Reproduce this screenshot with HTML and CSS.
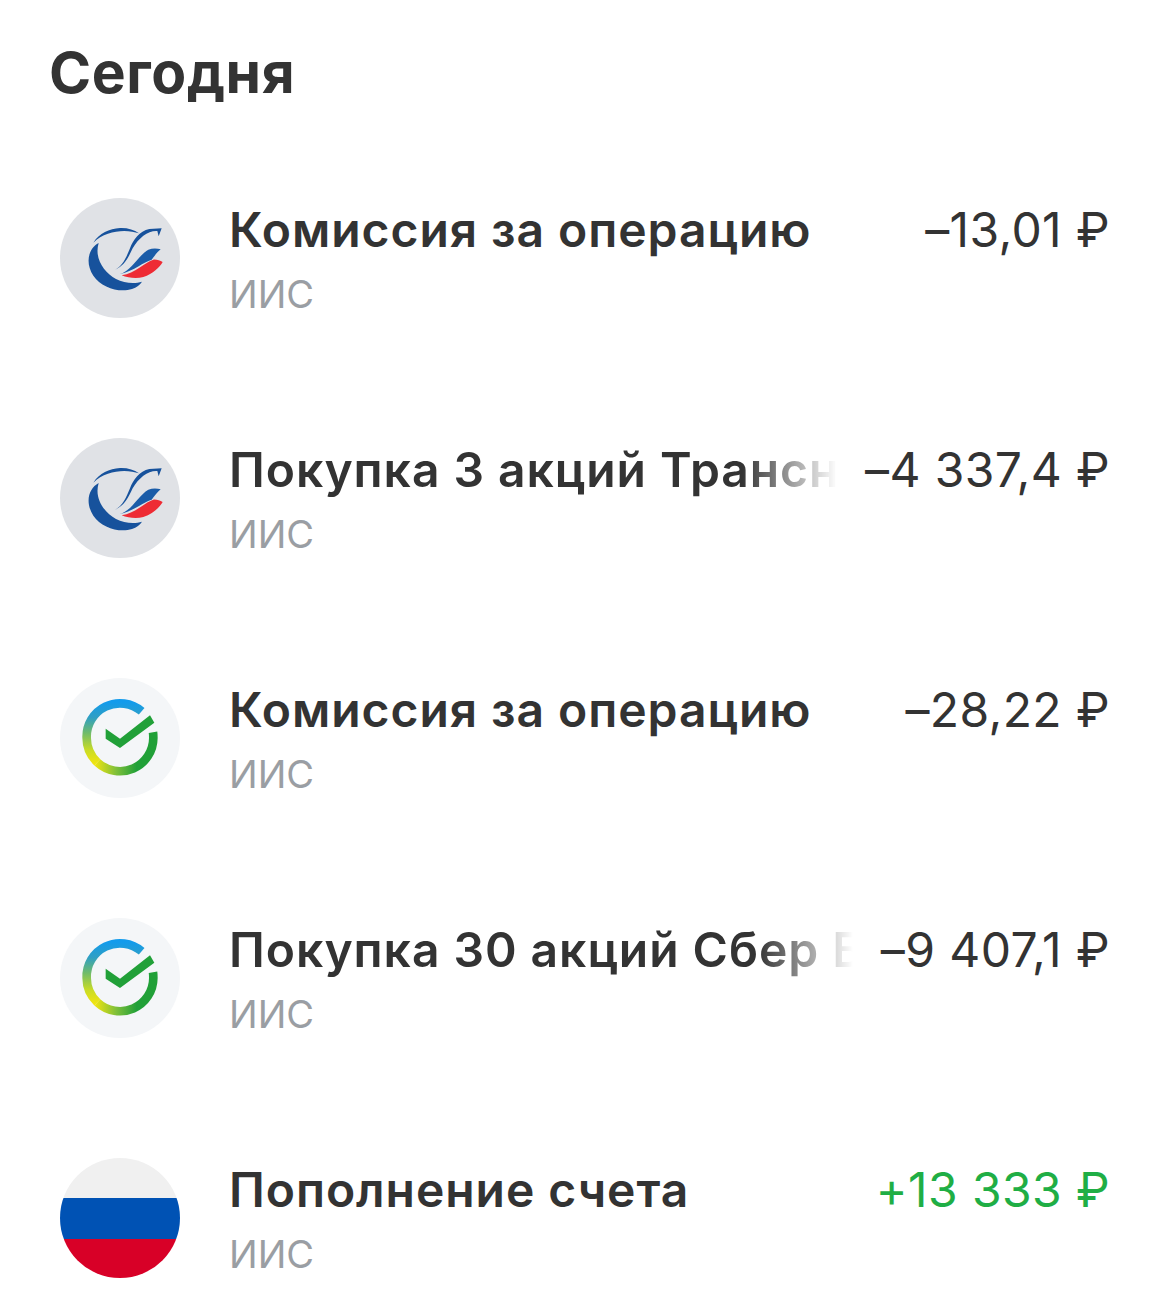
FILE: index.html
```html
<!DOCTYPE html>
<html lang="ru">

<head>
    <meta charset="UTF-8">
    <meta name="viewport" content="width=device-width, initial-scale=1.0">
    <title>Сегодня</title>
    <link rel="stylesheet" href="styles.css">
</head>

<body>

    <!-- Shared icons -->
    <svg class="defs" width="0" height="0">
        <defs>
            <linearGradient id="ringTop" gradientUnits="userSpaceOnUse" x1="0" y1="125" x2="0" y2="310">
                <stop offset="0" stop-color="#129bec" />
                <stop offset="0.25" stop-color="#2f9fc4" />
                <stop offset="0.5" stop-color="#6fbb6a" />
                <stop offset="0.78" stop-color="#c9dc25" />
                <stop offset="1" stop-color="#f0e40f" />
            </linearGradient>
            <linearGradient id="ringBottom" gradientUnits="userSpaceOnUse" x1="165" y1="0" x2="290" y2="0">
                <stop offset="0" stop-color="#f0e40f" />
                <stop offset="0.5" stop-color="#80c03a" />
                <stop offset="1" stop-color="#21a038" />
            </linearGradient>
            <symbol id="bank" viewBox="60 53 360 360">
                <circle cx="240" cy="233" r="180" fill="#e0e2e6" />
                <path d="M176 188C146 204 134 246 160 286C184 322 238 338 276 326C290 321 300 313 306 304C282 312 252 308 228 296C192 276 162 234 176 188Z" fill="#17529c" />
                <path d="M160 187C178 158 208 145 240 143C262 142 282 148 297 159C262 146 198 148 160 187Z" fill="#17529c" />
                <path d="M225 268C248 258 260 228 270 204C280 178 298 152 328 146L365 144L356 168L352 152C325 150 296 172 278 204C266 230 252 258 225 268Z" fill="#17529c" />
                <path d="M238 282C275 272 295 225 325 208C338 203 352 204 362 207C352 215 344 226 335 238C310 245 285 270 238 282Z" fill="#1a5ca8" />
                <path d="M245 285C285 280 315 245 340 238C350 237 360 241 368 245C358 262 340 280 310 290C290 296 265 293 245 285Z" fill="#ee2b34" />
            </symbol>
            <symbol id="sber" viewBox="60 53 360 360">
                <circle cx="240" cy="233" r="180" fill="#f4f6f8" />
                <path d="M305 153A100 100 0 0 0 140 233C140 262 152 287 172 306" fill="none" stroke="url(#ringTop)" stroke-width="26" />
                <path d="M172 306A100 100 0 0 0 340 233C340 227 340 222 339 216" fill="none" stroke="url(#ringBottom)" stroke-width="26" />
                <path d="M197 205L240 235L330 165L343 187L240 263L197 235Z" fill="#21a038" />
            </symbol>
        </defs>
    </svg>

    <main class="page">
        <h1 class="day-title">Сегодня</h1>

        <ul class="operations">
            <li class="operation">
                <svg class="operation-icon"><use href="#bank" /></svg>
                <div class="operation-body">
                    <div class="operation-top">
                        <span class="operation-name">Комиссия за операцию</span>
                        <span class="operation-sum">–13,01 ₽</span>
                    </div>
                    <div class="operation-account">ИИС</div>
                </div>
            </li>
            <li class="operation">
                <svg class="operation-icon"><use href="#bank" /></svg>
                <div class="operation-body">
                    <div class="operation-top">
                        <span class="operation-name fade">Покупка 3 акций Транснефть</span>
                        <span class="operation-sum">–4 337,4 ₽</span>
                    </div>
                    <div class="operation-account">ИИС</div>
                </div>
            </li>
            <li class="operation">
                <svg class="operation-icon"><use href="#sber" /></svg>
                <div class="operation-body">
                    <div class="operation-top">
                        <span class="operation-name">Комиссия за операцию</span>
                        <span class="operation-sum">–28,22 ₽</span>
                    </div>
                    <div class="operation-account">ИИС</div>
                </div>
            </li>
            <li class="operation">
                <svg class="operation-icon"><use href="#sber" /></svg>
                <div class="operation-body">
                    <div class="operation-top">
                        <span class="operation-name fade">Покупка 30 акций Сбер Банк</span>
                        <span class="operation-sum">–9 407,1 ₽</span>
                    </div>
                    <div class="operation-account">ИИС</div>
                </div>
            </li>
            <li class="operation">
                <svg class="operation-icon" viewBox="0 0 120 120">
                    <clipPath id="flagClip">
                        <circle cx="60" cy="60" r="60" />
                    </clipPath>
                    <g clip-path="url(#flagClip)">
                        <rect width="120" height="40" fill="#f0f0f0" />
                        <rect y="40" width="120" height="41" fill="#0052b4" />
                        <rect y="81" width="120" height="39" fill="#d80027" />
                    </g>
                </svg>
                <div class="operation-body">
                    <div class="operation-top">
                        <span class="operation-name">Пополнение счета</span>
                        <span class="operation-sum income">+13 333 ₽</span>
                    </div>
                    <div class="operation-account">ИИС</div>
                </div>
            </li>
        </ul>
    </main>

</body>

</html>
```

FILE: styles.css
```css
/* General Reset */
* {
    margin: 0;
    padding: 0;
    box-sizing: border-box;
}

body {
    font-family: 'Inter', 'Noto Sans', sans-serif;
    background-color: #fff;
    color: #333;
}

.defs {
    display: block;
    height: 0;
}

.page {
    padding: 38px 60px 0 49px;
}

.day-title {
    font-size: 57px;
    font-weight: 700;
    line-height: 70px;
    letter-spacing: 0.6px;
}

/* Operations list */
.operations {
    list-style: none;
    margin-top: 90px;
    display: flex;
    flex-direction: column;
    gap: 120px;
}

.operation {
    display: flex;
    align-items: flex-start;
    gap: 49px;
    margin-left: 11px;
    height: 120px;
}

.operation-icon {
    width: 120px;
    height: 120px;
    flex-shrink: 0;
}

.operation-body {
    flex: 1;
    min-width: 0;
}

.operation-top {
    display: flex;
    justify-content: space-between;
    gap: 28px;
    height: 64px;
    line-height: 64px;
}

.operation-name {
    flex: 1;
    min-width: 0;
    font-size: 48px;
    font-weight: 600;
    letter-spacing: 0.95px;
    white-space: nowrap;
    overflow: hidden;
}

/* Long names fade out before the sum */
.operation-name.fade {
    -webkit-mask-image: linear-gradient(to left, transparent, #000 95px);
    mask-image: linear-gradient(to left, transparent, #000 95px);
}

.operation-sum {
    flex-shrink: 0;
    font-size: 48px;
    font-weight: 400;
    letter-spacing: 0.4px;
    white-space: nowrap;
}

.operation-sum.income {
    color: #1fae45;
}

.operation-account {
    font-size: 38px;
    line-height: 64px;
    color: #9a9ea3;
}
```
